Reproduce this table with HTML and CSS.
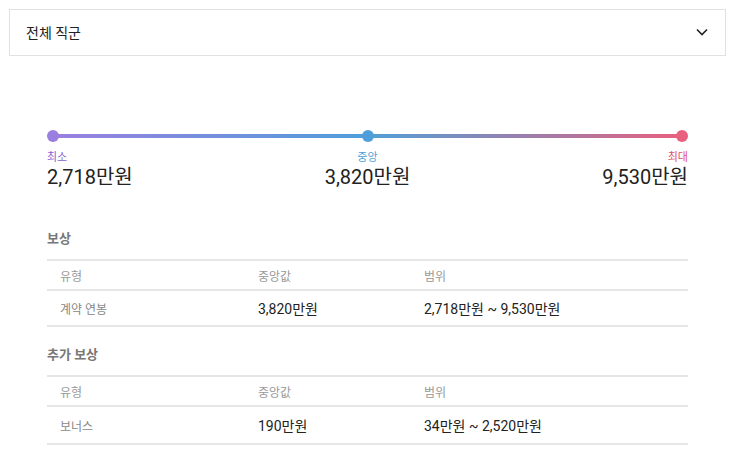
FILE: index.html
```html
<!DOCTYPE html>
<html lang="ko">

<head>
  <meta charset="utf-8" />
  <meta name="viewport" content="width=device-width, initial-scale=1.0" />
  <title>연봉 정보</title>
  <link rel="stylesheet" href="styles.css">
</head>

<body>
  <!-- Job filter -->
  <div class="select-box">
    <span>전체 직군</span>
    <svg class="chevron" width="12" height="8" viewBox="0 0 12 8">
      <path d="M1 1.5 L6 6.5 L11 1.5" fill="none" stroke="#222" stroke-width="1.6" />
    </svg>
  </div>

  <div class="content">
    <!-- Salary range -->
    <div class="range">
      <div class="range-bar">
        <span class="dot dot-min"></span>
        <span class="dot dot-mid"></span>
        <span class="dot dot-max"></span>
      </div>
      <div class="range-labels">
        <div class="label label-min">
          <small>최소</small>
          <strong>2,718만원</strong>
        </div>
        <div class="label label-mid">
          <small>중앙</small>
          <strong>3,820만원</strong>
        </div>
        <div class="label label-max">
          <small>최대</small>
          <strong>9,530만원</strong>
        </div>
      </div>
    </div>

    <h3>보상</h3>
    <div class="table">
      <div class="row head">
        <span>유형</span>
        <span>중앙값</span>
        <span>범위</span>
      </div>
      <div class="row">
        <span class="type">계약 연봉</span>
        <span>3,820만원</span>
        <span>2,718만원 ~ 9,530만원</span>
      </div>
    </div>

    <h3>추가 보상</h3>
    <div class="table">
      <div class="row head">
        <span>유형</span>
        <span>중앙값</span>
        <span>범위</span>
      </div>
      <div class="row tall">
        <span class="type">보너스</span>
        <span>190만원</span>
        <span>34만원 ~ 2,520만원</span>
      </div>
    </div>
  </div>
</body>

</html>
```

FILE: styles.css
```css
/* Global Reset */
* {
  margin: 0;
  padding: 0;
  box-sizing: border-box;
}

body {
  font-family: Roboto, 'Noto Sans CJK KR', sans-serif;
  background-color: #fff;
  color: #222;
  padding: 9px 5px 0 9px;
}

/* Filter */
.select-box {
  height: 47px;
  border: 1px solid #e1e1e1;
  display: flex;
  align-items: center;
  justify-content: space-between;
  padding: 0 17px 2px 16px;
  font-size: 14px;
  color: #222;
}

.chevron {
  display: block;
}

/* Main Content */
.content {
  margin: 78px 38px 0 38px;
}

.range-bar {
  position: relative;
  height: 4px;
  margin: 0 6px;
  border-radius: 2px;
  background: linear-gradient(to right, #9b7fe0 0%, #4e9fd9 50%, #e8607e 100%);
}

.dot {
  position: absolute;
  top: -4px;
  width: 12px;
  height: 12px;
  border-radius: 50%;
}

.dot-min {
  left: -6px;
  background-color: #9b7fe0;
}

.dot-mid {
  left: calc(50% - 6px);
  background-color: #4e9fd9;
}

.dot-max {
  right: -6px;
  background-color: #e8607e;
}

.range-labels {
  display: flex;
  justify-content: space-between;
  margin-top: 13px;
}

.label {
  display: flex;
  flex-direction: column;
}

.label small {
  font-size: 11px;
  line-height: 14px;
}

.label strong {
  font-size: 20px;
  font-weight: 400;
  line-height: 24px;
  color: #222;
}

.label-min small {
  color: #8a5fd6;
}

.label-mid {
  align-items: center;
}

.label-mid small {
  color: #4e9fd9;
}

.label-max {
  align-items: flex-end;
}

.label-max small {
  color: #e0506e;
}

h3 {
  font-size: 13px;
  font-weight: 700;
  color: #777;
  margin-top: 41px;
  margin-bottom: 11px;
  line-height: 18px;
}

.table + h3 {
  margin-top: 19px;
}

.table {
  border-top: 2px solid #e6e6e6;
}

.row {
  display: grid;
  grid-template-columns: 198px 166px 1fr;
  height: 36px;
  align-items: center;
  border-bottom: 2px solid #e6e6e6;
  font-size: 14px;
  color: #222;
}

.row.tall {
  height: 38px;
}

.row span {
  padding-left: 13px;
}

.row.head {
  height: 30px;
  font-size: 12px;
  color: #999;
}

.row .type {
  color: #888;
  font-size: 12px;
}
```
